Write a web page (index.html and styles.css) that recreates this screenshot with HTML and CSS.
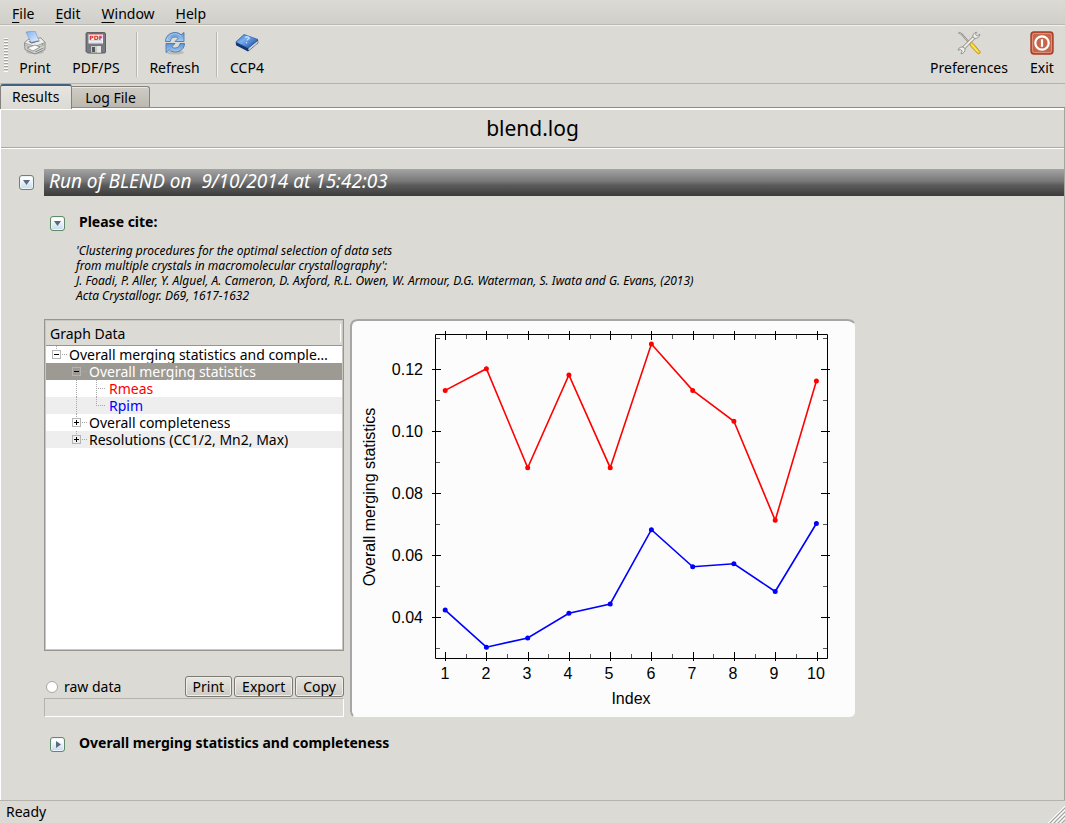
FILE: index.html
```html
<!DOCTYPE html>
<html lang="en">
<head>
<meta charset="utf-8">
<title>blend.log</title>
<link rel="stylesheet" href="styles.css">
</head>
<body>
<div class="window">
  <nav class="menubar" aria-label="Main menu">
    <button class="menu"><u>F</u>ile</button>
    <button class="menu"><u>E</u>dit</button>
    <button class="menu"><u>W</u>indow</button>
    <button class="menu"><u>H</u>elp</button>
  </nav>

  <div class="toolbar" role="toolbar">
    <span class="grip"></span>
    <button class="tool tool-print">
      <svg class="icon" viewBox="0 0 24 24">
        <defs><linearGradient id="paper" x1="0" y1="0" x2="1" y2="1"><stop offset="0" stop-color="#7db0f2"/><stop offset="1" stop-color="#e8f2ff"/></linearGradient></defs>
        <ellipse cx="12" cy="21" rx="9" ry="2" fill="#bbb9b4"/>
        <path d="M1.500 12L5 8.500 18 7l4 4.500v7L12 23 2 18.500z" fill="#d4d4d2" stroke="#777" stroke-width=".8"/>
        <path d="M1.500 12L5 8.500 18 7l4 4.500-10 4z" fill="#ececea" stroke="#888" stroke-width=".7"/>
        <path d="M5.500 10.500L14 9l3 1-8.500 2.500z" fill="#555"/>
        <path d="M3 1l9-1 4 9.500-8 2z" fill="url(#paper)" stroke="#7891b8" stroke-width=".6"/>
        <path d="M2 14l9.500 4L22 13.500" fill="none" stroke="#aaa"/>
        <path d="M4 17l8-3 5 2-7 4z" fill="#fafafa" stroke="#777" stroke-width=".7"/>
        <path d="M12 21l8.500-4" stroke="#888"/><circle cx="19.500" cy="13" r=".8" fill="#5b9d4b"/>
      </svg>
      <span>Print</span>
    </button>
    <button class="tool tool-pdf">
      <svg class="icon" viewBox="0 0 24 24">
        <path d="M3 1.500h17a1.500 1.500 0 0 1 1.500 1.500v18a1 1 0 0 1-1 1H3.500L2 20.500V3a1.500 1.500 0 0 1 1-1.500z" fill="#777a83" stroke="#4b4c52" stroke-width=".8"/>
        <path d="M4.500 2.500h14.500v10H4.500z" fill="#f4f4f4"/>
        <path d="M4.500 2h14.500v1.500H4.500z" fill="#c04a48"/>
        <path d="M5.500 9.500h12.500M5.500 11.300h12.500" stroke="#c6c8cc" stroke-width=".6"/>
        <text x="12" y="8.500" class="pdf-mark">PDF</text>
        <path d="M6.500 14.500h11v7.500h-11z" fill="#c9c9c5" stroke="#5a5b60" stroke-width=".6"/>
        <path d="M8 16h3v5H8z" fill="#56585f"/>
        <path d="M13 15h4v6.500h-4z" fill="#e4e4e0"/>
      </svg>
      <span>PDF/PS</span>
    </button>
    <span class="divider"></span>
    <button class="tool tool-refresh">
      <svg class="icon" viewBox="0 0 24 24">
        <defs><linearGradient id="arrow" x1="0" y1="0" x2="0" y2="1"><stop offset="0" stop-color="#5c93d2"/><stop offset="1" stop-color="#a9cbee"/></linearGradient></defs>
        <ellipse cx="12" cy="21.500" rx="9" ry="2" fill="#bdbcb7"/>
        <path d="M2.500 10.500C2.500 5 7 1.500 12 1.500c2.500 0 4.500.8 6 2.300L21 1.500v9h-9l3.200-3.200C14.200 6.300 13 6 12 6 9 6 7.500 8 7.200 10.500z" fill="url(#arrow)" stroke="#3c6faf" stroke-width=".8"/>
        <path d="M21.500 12.500c0 5-4 8.500-9 8.500-2.500 0-4.800-.8-6.300-2.400L3 21.500v-9h9l-3.200 3.300c1 .9 2.200 1.200 3.400 1.200 2.800 0 4.500-2 4.800-4.500z" fill="url(#arrow)" stroke="#3c6faf" stroke-width=".8"/>
        <path d="M4 9c.8-4 4.500-6.300 8-6.200 2.300 0 4.300.8 6 2.600" fill="none" stroke="#bcd8f5" stroke-width=".8"/>
      </svg>
      <span>Refresh</span>
    </button>
    <span class="divider"></span>
    <button class="tool tool-ccp4">
      <svg class="icon" viewBox="0 0 24 24">
        <defs><linearGradient id="cover" x1="0" y1="0" x2="1" y2=".8"><stop offset="0" stop-color="#1f5fc0"/><stop offset=".4" stop-color="#79b0f0"/><stop offset="1" stop-color="#1b4fa8"/></linearGradient></defs>
        <path d="M.8 11L13 17l10-8.500.3 3.500L13 20.500 1 14.200z" fill="#0f3474"/>
        <path d="M13.500 17.300l9.200-7.500v2.200l-9.200 7.500z" fill="#e6e8ec"/>
        <path d="M13.500 18.500l9.200-7.500" stroke="#9aa2b0" stroke-width=".5"/>
        <path d="M.8 11L9 3.500l14 5L13 17z" fill="url(#cover)" stroke="#1e4a94" stroke-width=".6"/>
        <path d="M10 6.300c2-1 5 0 4 1.400-.8.800-2 .6-1.900 1.800" fill="none" stroke="#d8eaff" stroke-width="1.200"/><circle cx="11.500" cy="11.800" r=".7" fill="#d8eaff"/>
      </svg>
      <span>CCP4</span>
    </button>
    <button class="tool tool-preferences">
      <svg class="icon" viewBox="0 0 24 24">
        <path d="M1.500 1.500l3 1.500 8 9" fill="none" stroke="#77776f" stroke-width="1.800"/>
        <path d="M1.500 1.500l3 1.500 8 9" fill="none" stroke="#e9e9e9" stroke-width=".7"/>
        <path d="M5 18.500L18.500 5" stroke="#85857f" stroke-width="3.600"/>
        <path d="M5 18.500L18.500 5" stroke="#ededeb" stroke-width="2.200"/>
        <path d="M19.500 1.200a4.200 4.200 0 0 0-3.500 5.300 4.200 4.200 0 0 0 6.800-3.300l-2.500 1.800-1.800-1.500z" fill="#ededeb" stroke="#85857f" stroke-width=".8"/>
        <path d="M7.800 17.200A4 4 0 0 0 1 19.200l2.500-.7 1.700 1.700-1.200 2.500a4 4 0 0 0 3.800-5.500z" fill="#ededeb" stroke="#85857f" stroke-width=".8"/>
        <path d="M12.500 13l2-1.800 2.300 2 6.200 7.300c.8 1.300-1 3-2.300 2l-6.500-6.800z" fill="#f8cf31" stroke="#b5850e" stroke-width=".8"/>
        <path d="M14.500 13.500l6.500 7.300" stroke="#fff0a0" stroke-width=".9"/>
      </svg>
      <span>Preferences</span>
    </button>
    <button class="tool tool-exit">
      <svg class="icon" viewBox="0 0 24 24">
        <rect x="1" y="1" width="22" height="22" rx="3" fill="#c6674b" stroke="#a93e28" stroke-width="1.400"/>
        <rect x="2.500" y="2.500" width="19" height="19" rx="2" fill="none" stroke="#e29b83" stroke-width=".8"/>
        <circle cx="12" cy="12" r="6.700" fill="none" stroke="#fff" stroke-width="2.200"/>
        <path d="M12 8.200v7.600" stroke="#fff" stroke-width="2.200"/>
      </svg>
      <span>Exit</span>
    </button>
  </div>

  <div class="tabs" role="tablist">
    <button class="tab active" role="tab" aria-selected="true">Results</button>
    <button class="tab" role="tab" aria-selected="false">Log File</button>
  </div>

  <main class="page">
    <h1 class="title">blend.log</h1>
    <div class="report">
      <section class="run">
        <div class="run-head">
          <button class="fold" aria-label="Collapse run"><svg viewBox="0 0 13 13"><path d="M3 4h7L6.500 9z"/></svg></button>
          <h2 class="run-title">Run of BLEND on&nbsp; 9/10/2014 at 15:42:03</h2>
        </div>
        <div class="section-head cite-head">
          <button class="fold" aria-label="Collapse citation"><svg viewBox="0 0 13 13"><path d="M3 4h7L6.500 9z"/></svg></button>
          <h3>Please cite:</h3>
        </div>
        <p class="citation">'Clustering procedures for the optimal selection of data sets<br>from multiple crystals in macromolecular crystallography':<br>J. Foadi, P. Aller, Y. Alguel, A. Cameron, D. Axford, R.L. Owen, W. Armour, D.G. Waterman, S. Iwata and G. Evans, (2013)<br>Acta Crystallogr. D69, 1617-1632</p>

        <div class="graph">
          <div class="graph-side">
            <div class="tree-box">
              <div class="tree-header">Graph Data</div>
              <ul class="tree" role="tree">
                <li class="row level-1" role="treeitem"><span class="node minus"></span><span class="label">Overall merging statistics and comple…</span></li>
                <li class="row level-2 selected" role="treeitem"><span class="node minus"></span><span class="label">Overall merging statistics</span></li>
                <li class="row level-3 red" role="treeitem"><span class="trunk"></span><span class="branch"></span><span class="label">Rmeas</span></li>
                <li class="row level-3 blue alt" role="treeitem"><span class="trunk"></span><span class="branch last"></span><span class="label">Rpim</span></li>
                <li class="row level-2" role="treeitem"><span class="node plus"></span><span class="label">Overall completeness</span></li>
                <li class="row level-2 alt" role="treeitem"><span class="node plus"></span><span class="label">Resolutions (CC1/2, Mn2, Max)</span></li>
              </ul>
            </div>
            <div class="actions">
              <label class="raw"><input type="radio" name="raw">raw data</label>
              <button class="push">Print</button>
              <button class="push">Export</button>
              <button class="push">Copy</button>
            </div>
            <div class="readout"></div>
          </div>
          <div class="chart">
            <svg viewBox="0 0 505 398" role="img" aria-label="Overall merging statistics by index">
              <path class="rim" d="M3 397q-2-2-2-5V8q0-7 7-7h489q5 0 7 3"/>
              <path class="axis" d="M85.500 15.500h392v324h-392z"/>
              <path class="axis" d="M95.500 12v9m41-9v9m42-9v9m41-9v9m41-9v9m41-9v9m42-9v9m41-9v9m41-9v9m42-9v9"/>
              <path class="axis" d="M95.500 333v9m41-9v9m42-9v9m41-9v9m41-9v9m41-9v9m42-9v9m41-9v9m41-9v9m42-9v9"/>
              <path class="axis" d="M82 50.500h9m-9 62h9m-9 62h9m-9 62h9m-9 62h9M471 50.500h9m-9 62h9m-9 62h9m-9 62h9m-9 62h9"/>
              <path class="minor" d="M116.500 16v4m41-4v4m41-4v4m42-4v4m41-4v4m41-4v4m41-4v4m42-4v4m41-4v4"/>
              <path class="minor" d="M116.500 335v4m41-4v4m41-4v4m42-4v4m41-4v4m41-4v4m41-4v4m42-4v4m41-4v4"/>
              <path class="minor" d="M86 19.500h4m-4 62h4m-4 62h4m-4 62h4m-4 62h4m-4 62h4M473 19.500h4m-4 62h4m-4 62h4m-4 62h4m-4 62h4m-4 62h4"/>
              <g class="y-labels">
                <text x="73" y="56">0.12</text><text x="73" y="118">0.10</text><text x="73" y="180">0.08</text><text x="73" y="242">0.06</text><text x="73" y="304">0.04</text>
              </g>
              <g class="x-labels">
                <text x="95" y="360">1</text><text x="136" y="360">2</text><text x="177" y="360">3</text><text x="218" y="360">4</text><text x="259" y="360">5</text><text x="301" y="360">6</text><text x="342" y="360">7</text><text x="383" y="360">8</text><text x="424" y="360">9</text><text x="466" y="360">10</text>
                <text x="281" y="385">Index</text>
                <text transform="translate(25 178) rotate(-90)">Overall merging statistics</text>
              </g>
              <g class="series rmeas">
                <polyline points="95.200,71.400 136.400,49.700 177.700,148.700 218.900,55.900 260.200,148.700 301.400,25 342.700,71.400 383.900,102.300 425.200,201.300 466.400,62.100"/>
                <path class="dots" d="M95.200 71.400h0M136.400 49.700h0M177.700 148.700h0M218.900 55.900h0M260.200 148.700h0M301.400 25h0M342.700 71.400h0M383.900 102.300h0M425.200 201.300h0M466.400 62.100h0"/>
              </g>
              <g class="series rpim">
                <polyline points="95.200,291.100 136.400,328.200 177.700,319 218.900,294.200 260.200,285 301.400,210.700 342.700,247.800 383.900,244.800 425.200,272.500 466.400,204.500"/>
                <path class="dots" d="M95.200 291.100h0M136.400 328.200h0M177.700 319h0M218.900 294.200h0M260.200 285h0M301.400 210.700h0M342.700 247.800h0M383.900 244.800h0M425.200 272.500h0M466.400 204.500h0"/>
              </g>
            </svg>
          </div>
        </div>

        <div class="section-head">
          <button class="fold" aria-label="Expand statistics"><svg viewBox="0 0 13 13"><path d="M5 3v7l5-3.500z"/></svg></button>
          <h3>Overall merging statistics and completeness</h3>
        </div>
      </section>
    </div>
  </main>

  <footer class="statusbar">
    <span>Ready</span>
    <svg class="resize" viewBox="0 0 17 17"><path class="groove-light" d="M0 17L17 0M4 17L17 4M8 17l9-9M12 17l5-5"/><path class="groove-dark" d="M2 17L17 2M6 17L17 6M10 17l7-7M14 17l3-3"/></svg>
  </footer>
</div>
</body>
</html>
```
FILE: styles.css
```css
* { box-sizing: border-box; }

body {
  margin: 0;
  background: #dbdad5;
  color: #000;
  font: 14px/17px "Noto Sans", "Open Sans", sans-serif;
}

button {
  margin: 0;
  padding: 0;
  border: 0;
  background: none;
  color: inherit;
  font: inherit;
}

h1, h2, h3, p, ul { margin: 0; padding: 0; }

.window {
  display: flex;
  flex-direction: column;
  min-height: 100vh;
}

/* Menu bar */
.menubar {
  display: flex;
  gap: 21px;
  padding: 5px 12px 3px;
  height: 25px;
  background: linear-gradient(#dbdad5, #d0cfca);
  border-bottom: 1px solid #b9b8b3;
}
.menu { height: 17px; }
.menu u { text-underline-offset: 3px; text-decoration-thickness: 1px; }

/* Toolbar */
.toolbar {
  display: flex;
  align-items: flex-start;
  height: 59px;
  padding: 5px 4px 0;
  border-top: 1px solid #f2f1ee;
  border-bottom: 1px solid #b4b3ae;
}
.grip {
  width: 4px;
  height: 34px;
  margin-top: 7px;
  background: repeating-linear-gradient(#fff 0 1px, #a5a49f 1px 2px, #dbdad5 2px 3px);
}
.tool {
  display: flex;
  flex-direction: column;
  align-items: center;
  gap: 4px;
}
.icon { width: 24px; height: 24px; }
.tool-print { width: 54px; }
.tool-pdf { width: 68px; }
.tool-refresh { width: 71px; }
.tool-ccp4 { width: 56px; }
.tool-preferences { width: 96px; margin-left: auto; }
.tool-exit { width: 50px; margin-right: -6px; }
.pdf-mark { font: bold 6px "DejaVu Sans", sans-serif; fill: #d62525; text-anchor: middle; }
.divider {
  width: 2px;
  height: 45px;
  margin: 1px 1px 0 6px;
  border-left: 1px solid #b8b7b2;
  border-right: 1px solid #f4f3f0;
}

/* Tabs */
.tabs {
  display: flex;
  align-items: flex-end;
  height: 24px;
  border-bottom: 1px solid #8c8b85;
}
.tab {
  height: 21px;
  padding: 1px 13px 0;
  border: 1px solid #84827b;
  border-left: 0;
  border-bottom: 0;
  border-radius: 0 3px 0 0;
  background: linear-gradient(#cfccc5, #bdb9b1);
  box-shadow: inset 0 1px #e9e7e2;
}
.tab.active {
  position: relative;
  height: 25px;
  margin-bottom: -2px;
  padding: 0 12px 2px 11px;
  border-top: 2px solid #43617f;
  border-left: 1px solid #84827b;
  border-radius: 3px 3px 0 0;
  background: linear-gradient(#e6e4df, #dbdad5);
}

/* Page */
.page {
  flex: 1;
  border-left: 1px solid #fff;
  border-right: 1px solid #a5a49f;
}
.title {
  height: 40px;
  border-top: 2px solid #fff;
  border-bottom: 1px solid #aaa9a4;
  font-size: 21px;
  font-weight: 400;
  line-height: 36px;
  text-align: center;
}
.report {
  padding: 20px 0 40px;
  border-top: 1px solid #fff;
}
.fold {
  width: 15px;
  height: 15px;
  border: 1px solid #5e8b68;
  border-radius: 3px;
  background: linear-gradient(#fff 20%, #c6d8ec);
  box-shadow: inset 0 0 0 1px #edf4fb;
}
.fold svg { display: block; width: 13px; height: 13px; fill: #566b80; }
.run-head { display: flex; align-items: center; gap: 10px; padding-left: 18px; }
.run-title {
  flex: 1;
  height: 27px;
  padding-left: 5px;
  background: linear-gradient(#a4a4a4, #787878 45%, #5b5b5b 60%, #3c3c3c);
  color: #fff;
  font-size: 19px;
  font-style: italic;
  font-weight: 400;
  line-height: 24px;
}
.section-head { display: flex; align-items: center; gap: 14px; padding-left: 49px; }
.cite-head { padding-top: 18px; }
.section-head h3 { padding-bottom: 4px; font-size: 14px; line-height: 15px; }
.citation {
  margin: 10px 0 16px 75px;
  font-size: 12px;
  font-style: italic;
  line-height: 15px;
}

/* Graph panel */
.graph {
  display: flex;
  align-items: stretch;
  gap: 6px;
  margin: 0 0 18px 43px;
}
.graph-side { display: flex; flex-direction: column; flex: 0 0 300px; min-width: 0; }
.tree-box {
  height: 332px;
  border: 1px solid #96958f;
  outline: 1px solid #c8c7c2;
  outline-offset: -2px;
  background: #fff;
}
.tree-header {
  height: 26px;
  margin: 0 1px;
  padding: 5px 4px;
  border-bottom: 1px solid #96958f;
  background: linear-gradient(#fff, #fff) 294px 4px / 1px 18px no-repeat #dbdad5;
}
.tree { margin: 0 1px; list-style: none; }
.row { display: flex; height: 17px; padding-right: 4px; white-space: nowrap; }
.label { overflow: hidden; text-overflow: ellipsis; }
.alt { background: #eee; }
.selected { background: #9c9a93; color: #fff; }
.red { color: #f00; }
.blue { color: #00f; }
.level-1 { padding-left: 6px; }
.level-2 { padding-left: 26px; }
.level-3 { padding-left: 30px; }
.node {
  flex: none;
  width: 17px;
  height: 17px;
  background:
    linear-gradient(#000, #000) 2px 8px / 5px 1px no-repeat,
    linear-gradient(#b4b4b4, #b4b4b4) 0 4px / 9px 1px no-repeat,
    linear-gradient(#b4b4b4, #b4b4b4) 0 12px / 9px 1px no-repeat,
    linear-gradient(#b4b4b4, #b4b4b4) 0 4px / 1px 9px no-repeat,
    linear-gradient(#b4b4b4, #b4b4b4) 8px 4px / 1px 9px no-repeat,
    repeating-linear-gradient(90deg, #a8a8a8 0 1px, transparent 1px 2px) 10px 8px / 5px 1px no-repeat,
    repeating-linear-gradient(#a8a8a8 0 1px, transparent 1px 2px) 4px 0 / 1px 4px no-repeat;
}
.node.plus {
  background:
    linear-gradient(#000, #000) 2px 8px / 5px 1px no-repeat,
    linear-gradient(#000, #000) 4px 6px / 1px 5px no-repeat,
    linear-gradient(#b4b4b4, #b4b4b4) 0 4px / 9px 1px no-repeat,
    linear-gradient(#b4b4b4, #b4b4b4) 0 12px / 9px 1px no-repeat,
    linear-gradient(#b4b4b4, #b4b4b4) 0 4px / 1px 9px no-repeat,
    linear-gradient(#b4b4b4, #b4b4b4) 8px 4px / 1px 9px no-repeat,
    repeating-linear-gradient(90deg, #a8a8a8 0 1px, transparent 1px 2px) 10px 8px / 5px 1px no-repeat,
    repeating-linear-gradient(#a8a8a8 0 1px, transparent 1px 2px) 4px 0 / 1px 4px no-repeat;
}
.trunk {
  flex: none;
  width: 20px;
  background: repeating-linear-gradient(#a8a8a8 0 1px, transparent 1px 2px) 0 0 / 1px 100% no-repeat;
}
.branch {
  flex: none;
  width: 13px;
  background:
    repeating-linear-gradient(90deg, #a8a8a8 0 1px, transparent 1px 2px) 0 8px / 10px 1px no-repeat,
    repeating-linear-gradient(#a8a8a8 0 1px, transparent 1px 2px) 0 0 / 1px 17px no-repeat;
}
.branch.last {
  background:
    repeating-linear-gradient(90deg, #a8a8a8 0 1px, transparent 1px 2px) 0 8px / 10px 1px no-repeat,
    repeating-linear-gradient(#a8a8a8 0 1px, transparent 1px 2px) 0 0 / 1px 9px no-repeat;
}
.actions {
  display: flex;
  align-items: center;
  gap: 2px;
  margin-top: auto;
  padding-bottom: 1px;
}
.raw { display: flex; align-items: center; gap: 6px; margin-right: auto; }
.raw input {
  appearance: none;
  width: 12px;
  height: 12px;
  margin: 0 0 0 2px;
  border: 1px solid #a9a7a0;
  border-radius: 50%;
  background: #fff;
}
.push {
  height: 21px;
  padding: 0 7px;
  border: 1px solid #7d7a73;
  border-radius: 3px;
  background: linear-gradient(#e9e7e3, #cdcac4);
  box-shadow: inset 0 0 0 1px #efeeea;
}
.readout {
  height: 19px;
  border: 1px solid #b3b2ad;
  border-right-color: #fff;
  border-bottom-color: #fff;
}

/* Chart */
.chart {
  flex: 0 1 505px;
  border-radius: 8px 8px 5px 5px;
  background: #fcfcfc;
}
.chart svg { display: block; width: 100%; }
.chart text { font: 16px "Liberation Sans", Arial, sans-serif; }
.rim { fill: none; stroke: #a6a6a6; stroke-width: 2; }
.axis { fill: none; stroke: #000; }
.minor { fill: none; stroke: #555; }
.y-labels { text-anchor: end; }
.x-labels { text-anchor: middle; }
.series { fill: none; stroke-width: 2; }
.rmeas { stroke: #f00; }
.rpim { stroke: #00f; }
.series polyline { stroke-width: 1.6; }
.dots { stroke-width: 5; stroke-linecap: round; }

/* Status bar */
.statusbar {
  display: flex;
  justify-content: space-between;
  align-items: flex-end;
  height: 23px;
  padding-left: 6px;
  border-top: 1px solid #b4b3ae;
  line-height: 22px;
}
.resize { width: 17px; height: 17px; fill: none; }
.groove-light { stroke: #fff; }
.groove-dark { stroke: #a3a29c; }
```
